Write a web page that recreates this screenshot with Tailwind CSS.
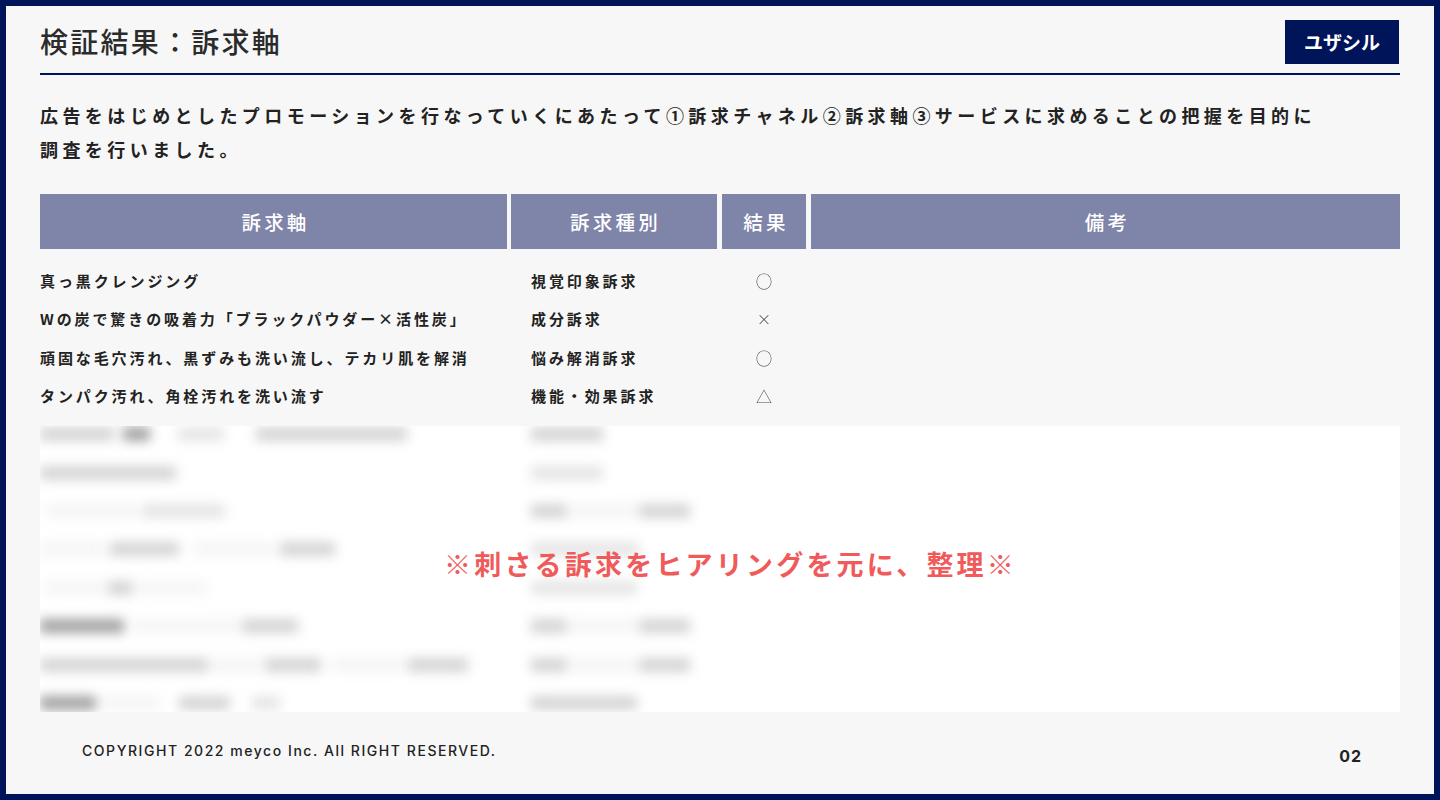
<!DOCTYPE html>
<html lang="ja">
<head>
<meta charset="utf-8">
<script src="https://cdn.jsdelivr.net/npm/@tailwindcss/browser@4"></script>
</head>
<body class="m-0">
<div class="w-[1440px] h-[800px] overflow-hidden border-[6px] border-[#00145a] bg-[#f7f7f7] px-[34px] font-['Noto_Sans_CJK_JP',sans-serif] flex flex-col relative">
  <header class="h-[69px] shrink-0 flex justify-between items-start border-b-2 border-[#00145a]">
    <h1 class="m-0 mt-[15px] text-[28px] leading-[40px] font-medium tracking-[2.25px] text-[#2b2b2b]">検証結果：訴求軸</h1>
    <div class="mt-[14px] mr-[1px] w-[114px] h-[44px] bg-[#00145a] text-white text-[19px] leading-[43px] font-bold text-center">ユザシル</div>
  </header>

  <p class="m-0 mt-[23px] text-[18px] leading-[34px] font-bold tracking-[4.43px] text-[#222] whitespace-nowrap">広告をはじめとしたプロモーションを行なっていくにあたって①訴求チャネル②訴求軸③サービスに求めることの把握を目的に<br>調査を行いました。</p>

  <div class="mt-[28px] grid grid-cols-[471px_211px_89px_589px] h-[55px] text-white text-[19.5px] font-medium tracking-[3.2px] leading-[55px] text-center">
    <div class="bg-[#7f84a9] mr-[4px] pl-[4px]">訴求軸</div>
    <div class="bg-[#7f84a9] mr-[5px] pl-[3px]">訴求種別</div>
    <div class="bg-[#7f84a9] mr-[5px] pl-[4px]">結果</div>
    <div class="bg-[#7f84a9] pl-[4px]">備考</div>
  </div>

  <div class="mt-[13px] text-[15px] font-semibold tracking-[2.9px] leading-[38.25px] text-[#222] whitespace-nowrap">
    <div class="grid grid-cols-[491px_191px_84px_594px]"><div>真っ黒クレンジング</div><div>視覚印象訴求</div><div class="text-center tracking-normal text-[16.5px] font-light text-[#444] opacity-95">○</div><div></div></div>
    <div class="grid grid-cols-[491px_191px_84px_594px]"><div>Wの炭で驚きの吸着力「ブラックパウダー×活性炭」</div><div>成分訴求</div><div class="text-center tracking-normal text-[14.5px] font-light text-[#333] opacity-95">×</div><div></div></div>
    <div class="grid grid-cols-[491px_191px_84px_594px]"><div>頑固な毛穴汚れ、黒ずみも洗い流し、テカリ肌を解消</div><div>悩み解消訴求</div><div class="text-center tracking-normal text-[16.5px] font-light text-[#444] opacity-95">○</div><div></div></div>
    <div class="grid grid-cols-[491px_191px_84px_594px]"><div>タンパク汚れ、角栓汚れを洗い流す</div><div>機能・効果訴求</div><div class="text-center tracking-normal text-[16px] font-light text-[#444] opacity-95">△</div><div></div></div>
  </div>

  <div class="mt-[11px] h-[286px] bg-white overflow-hidden shrink-0">
    <div class="-mt-[11px] blur-[6px]">
      <div class="h-[38.4px] grid grid-cols-[491px_1fr] items-center">
        <div class="flex h-[14px]"><div class="w-[74px] bg-neutral-300"></div><div class="ml-[9px] w-[27px] bg-neutral-400"></div><div class="ml-[28px] w-[46px] bg-neutral-200"></div><div class="ml-[32px] w-[151px] bg-neutral-300"></div></div>
        <div class="flex h-[14px]"><div class="w-[72px] bg-neutral-300"></div></div>
      </div>
      <div class="h-[38.4px] grid grid-cols-[491px_1fr] items-center">
        <div class="flex h-[14px]"><div class="w-[136px] bg-neutral-300"></div></div>
        <div class="flex h-[14px]"><div class="w-[72px] bg-neutral-200"></div></div>
      </div>
      <div class="h-[38.4px] grid grid-cols-[491px_1fr] items-center">
        <div class="flex h-[14px]"><div class="ml-[6px] w-[92px] bg-neutral-100"></div><div class="ml-[4px] w-[83px] bg-neutral-200"></div></div>
        <div class="flex h-[14px]"><div class="w-[35px] bg-neutral-300"></div><div class="w-[74px] bg-neutral-100"></div><div class="w-[50px] bg-neutral-300"></div></div>
      </div>
      <div class="h-[38.4px] grid grid-cols-[491px_1fr] items-center">
        <div class="flex h-[14px]"><div class="w-[65px] bg-neutral-100"></div><div class="ml-[5px] w-[69px] bg-neutral-300"></div><div class="ml-[14px] w-[82px] bg-neutral-100"></div><div class="ml-[5px] w-[55px] bg-neutral-300"></div></div>
        <div class="flex h-[14px]"><div class="w-[108px] bg-neutral-200"></div></div>
      </div>
      <div class="h-[38.4px] grid grid-cols-[491px_1fr] items-center">
        <div class="flex h-[14px]"><div class="ml-[6px] w-[59px] bg-neutral-100"></div><div class="ml-[3px] w-[25px] bg-neutral-300"></div><div class="ml-[5px] w-[69px] bg-neutral-100"></div></div>
        <div class="flex h-[14px]"><div class="w-[106px] bg-neutral-200"></div></div>
      </div>
      <div class="h-[38.4px] grid grid-cols-[491px_1fr] items-center">
        <div class="flex h-[14px]"><div class="w-[84px] bg-neutral-400"></div><div class="ml-[9px] w-[110px] bg-neutral-100"></div><div class="w-[55px] bg-neutral-300"></div></div>
        <div class="flex h-[14px]"><div class="w-[35px] bg-neutral-300"></div><div class="w-[74px] bg-neutral-100"></div><div class="w-[50px] bg-neutral-300"></div></div>
      </div>
      <div class="h-[38.4px] grid grid-cols-[491px_1fr] items-center">
        <div class="flex h-[14px]"><div class="w-[167px] bg-neutral-300"></div><div class="w-[59px] bg-neutral-100"></div><div class="w-[55px] bg-neutral-300"></div><div class="ml-[9px] w-[74px] bg-neutral-100"></div><div class="ml-[4px] w-[60px] bg-neutral-300"></div></div>
        <div class="flex h-[14px]"><div class="w-[35px] bg-neutral-300"></div><div class="w-[74px] bg-neutral-100"></div><div class="w-[50px] bg-neutral-300"></div></div>
      </div>
      <div class="h-[38.4px] grid grid-cols-[491px_1fr] items-center">
        <div class="flex h-[14px]"><div class="w-[56px] bg-neutral-400"></div><div class="ml-[5px] w-[59px] bg-neutral-100"></div><div class="ml-[19px] w-[51px] bg-neutral-300"></div><div class="ml-[22px] w-[28px] bg-neutral-200"></div></div>
        <div class="flex h-[14px]"><div class="w-[106px] bg-neutral-300"></div></div>
      </div>
    </div>
  </div>

  <div class="absolute left-[438px] top-[539px] text-[27px] leading-[38px] font-semibold tracking-[3.2px] text-[#f05a5a] whitespace-nowrap">※刺さる訴求をヒアリングを元に、整理※</div>

  <footer class="flex justify-between items-start pl-[42px] pr-[38px] mt-[29px] font-['Inter',sans-serif] text-[#222]">
    <div class="text-[14px] leading-[20px] font-medium tracking-[1.55px]">COPYRIGHT 2022 meyco Inc. All RIGHT RESERVED.</div>
    <div class="mt-[5px] text-[16px] leading-[20px] font-bold tracking-[1px]">02</div>
  </footer>
</div>
</body>
</html>
